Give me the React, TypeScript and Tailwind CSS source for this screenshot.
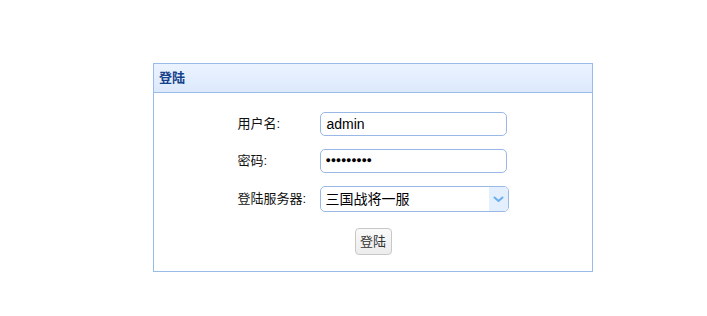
import React from "react";

const font = { fontFamily: '"Liberation Sans", "Noto Sans CJK SC", sans-serif' };

export default function App() {
  return (
    <div className="w-[707px] h-[316px] bg-white" style={font}>
      <div className="pt-[63px] pl-[153px]">
        <div className="w-[440px] h-[209px] border border-[#99bbe8] flex flex-col">
          <div className="h-[29px] border-b border-[#99bbe8] bg-gradient-to-b from-[#ebf3ff] to-[#dde9fc] flex items-center pl-[5px] text-[13px] font-bold text-[#15428b]">
            登陆
          </div>
          <div className="flex-1 flex flex-col items-center pt-[19px]">
            <div className="flex flex-col gap-[13px] w-[271px] text-[13px] text-[#111]">
              <div className="flex items-center h-[24px]">
                <span className="w-[82px]">用户名:</span>
                <div className="w-[187px] h-[24px] border border-[#99b8e6] rounded-[5px] flex items-center px-[6px] text-[14px] text-black">
                  admin
                </div>
              </div>
              <div className="flex items-center h-[24px]">
                <span className="w-[82px]">密码:</span>
                <div className="w-[187px] h-[24px] border border-[#99b8e6] rounded-[5px] flex items-center px-[5px] text-[9px] text-black tracking-[-0.3px]">
                  ●●●●●●●●●
                </div>
              </div>
              <div className="flex items-center h-[26px]">
                <span className="w-[82px]">登陆服务器:</span>
                <div className="w-[189px] h-[26px] border border-[#99b8e6] rounded-[5px] flex items-center overflow-hidden">
                  <span className="flex-1 pl-[5px] text-[14px] text-black">三国战将一服</span>
                  <span className="w-[19px] h-full bg-[#e4effd] flex items-center justify-center">
                    <svg width="11" height="7" viewBox="0 0 11 7">
                      <path d="M1.5 1.5 L5.5 5 L9.5 1.5" fill="none" stroke="#6aaef0" strokeWidth="2" strokeLinecap="round" strokeLinejoin="round" />
                    </svg>
                  </span>
                </div>
              </div>
            </div>
            <button className="mt-[16px] w-[37px] h-[27px] border border-[#c8c8c8] rounded-[4px] bg-gradient-to-b from-[#fafafa] to-[#ececec] text-[13px] text-[#333] flex items-center justify-center">
              登陆
            </button>
          </div>
        </div>
      </div>
    </div>
  );
}
